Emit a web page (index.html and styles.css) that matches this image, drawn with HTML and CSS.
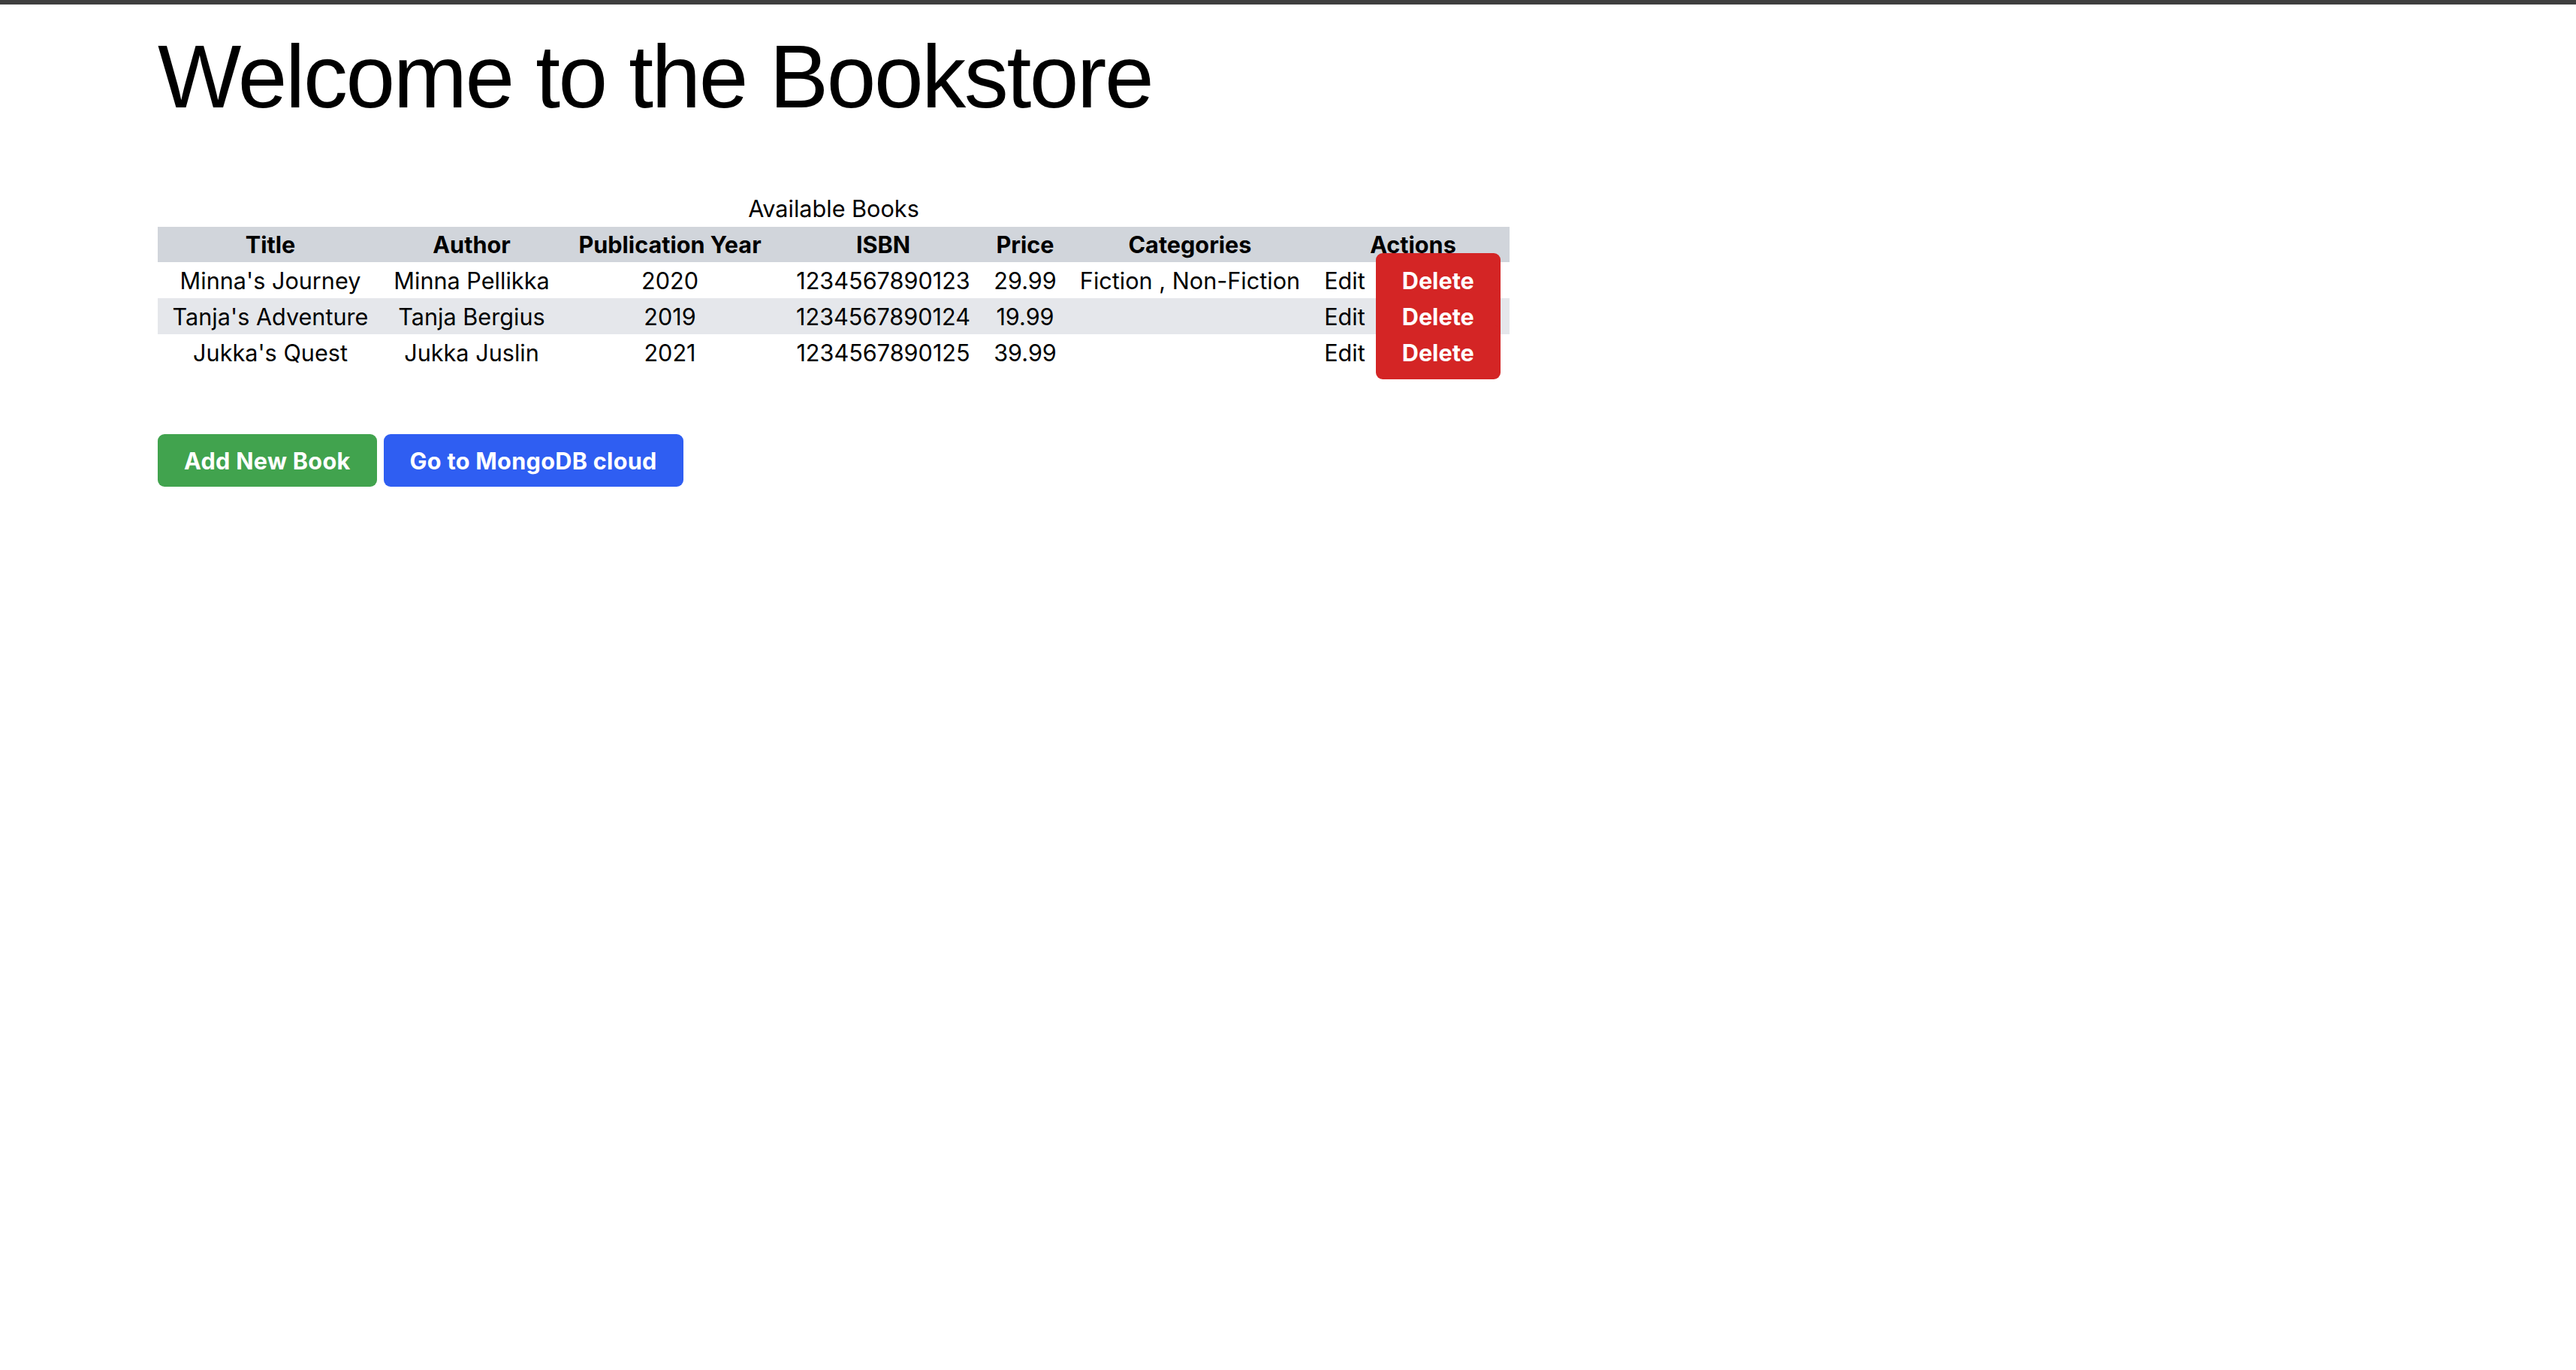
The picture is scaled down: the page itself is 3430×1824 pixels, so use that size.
FILE: index.html
```html
<!DOCTYPE html>
<html lang="en">
<head>
<meta charset="utf-8">
<title>Bookstore</title>
<link rel="stylesheet" href="styles.css">
</head>
<body>
<div class="topbar"></div>
<main class="page">
  <h1 class="title">Welcome to the Bookstore</h1>
  <table class="books">
    <caption class="caption">Available Books</caption>
    <colgroup>
      <col class="c-title">
      <col class="c-author">
      <col class="c-year">
      <col class="c-isbn">
      <col class="c-price">
      <col class="c-cat">
      <col class="c-actions">
    </colgroup>
    <thead>
      <tr class="head">
        <th>Title</th>
        <th>Author</th>
        <th>Publication Year</th>
        <th>ISBN</th>
        <th>Price</th>
        <th>Categories</th>
        <th>Actions</th>
      </tr>
    </thead>
    <tbody>
      <tr>
        <td>Minna's Journey</td>
        <td>Minna Pellikka</td>
        <td>2020</td>
        <td>1234567890123</td>
        <td>29.99</td>
        <td>Fiction , Non-Fiction</td>
        <td><span class="edit">Edit</span><span class="delete">Delete</span></td>
      </tr>
      <tr class="alt">
        <td>Tanja's Adventure</td>
        <td>Tanja Bergius</td>
        <td>2019</td>
        <td>1234567890124</td>
        <td>19.99</td>
        <td></td>
        <td><span class="edit">Edit</span><span class="delete">Delete</span></td>
      </tr>
      <tr>
        <td>Jukka's Quest</td>
        <td>Jukka Juslin</td>
        <td>2021</td>
        <td>1234567890125</td>
        <td>39.99</td>
        <td></td>
        <td><span class="edit">Edit</span><span class="delete">Delete</span></td>
      </tr>
    </tbody>
  </table>
  <div class="actions">
    <a class="btn btn-green">Add New Book</a>
    <a class="btn btn-blue">Go to MongoDB cloud</a>
  </div>
</main>
</body>
</html>
```
FILE: styles.css
```css
html, body {
  margin: 0;
  padding: 0;
  background: #ffffff;
}

body {
  font-family: Inter, "Noto Sans", "Liberation Sans", sans-serif;
  font-size: 30.625px;
  color: #000000;
}

.topbar {
  height: 6px;
  background: #3f3f3f;
}

.page {
  padding-left: 210px;
}

.title {
  font-family: "Liberation Sans", Arial, sans-serif;
  font-weight: 400;
  font-size: 118px;
  line-height: 118px;
  letter-spacing: -2.4px;
  margin: 37px 0 98px 0;
}

.books {
  border-collapse: collapse;
  table-layout: fixed;
  width: 1800px;
}

.caption {
  line-height: 37px;
  padding-bottom: 6px;
  text-align: center;
}

.c-title { width: 300px; }
.c-author { width: 236px; }
.c-year { width: 292px; }
.c-isbn { width: 276px; }
.c-price { width: 102px; }
.c-cat { width: 337px; }
.c-actions { width: 257px; }

.books th,
.books td {
  padding: 0;
  text-align: center;
  vertical-align: middle;
  white-space: nowrap;
  line-height: 37px;
}

.books th {
  height: 47px;
  font-weight: 700;
}

.books td {
  height: 48px;
}

.head {
  background: #d1d5db;
}

.alt {
  background: #e5e7eb;
}

.edit {
  margin-right: 16px;
}

.delete {
  background: #d42525;
  color: #ffffff;
  font-weight: 700;
  padding: 17.5px 35px;
  border-radius: 9px;
  position: relative;
  left: -2px;
}

.actions {
  display: flex;
  gap: 9px;
  margin-top: 85px;
}

.btn {
  display: inline-block;
  color: #ffffff;
  font-weight: 700;
  line-height: 37px;
  letter-spacing: 0.3px;
  padding: 16.5px 35px;
  border-radius: 9px;
}

.btn-green {
  background: #41a34e;
}

.btn-blue {
  background: #2f5ef2;
}
```
